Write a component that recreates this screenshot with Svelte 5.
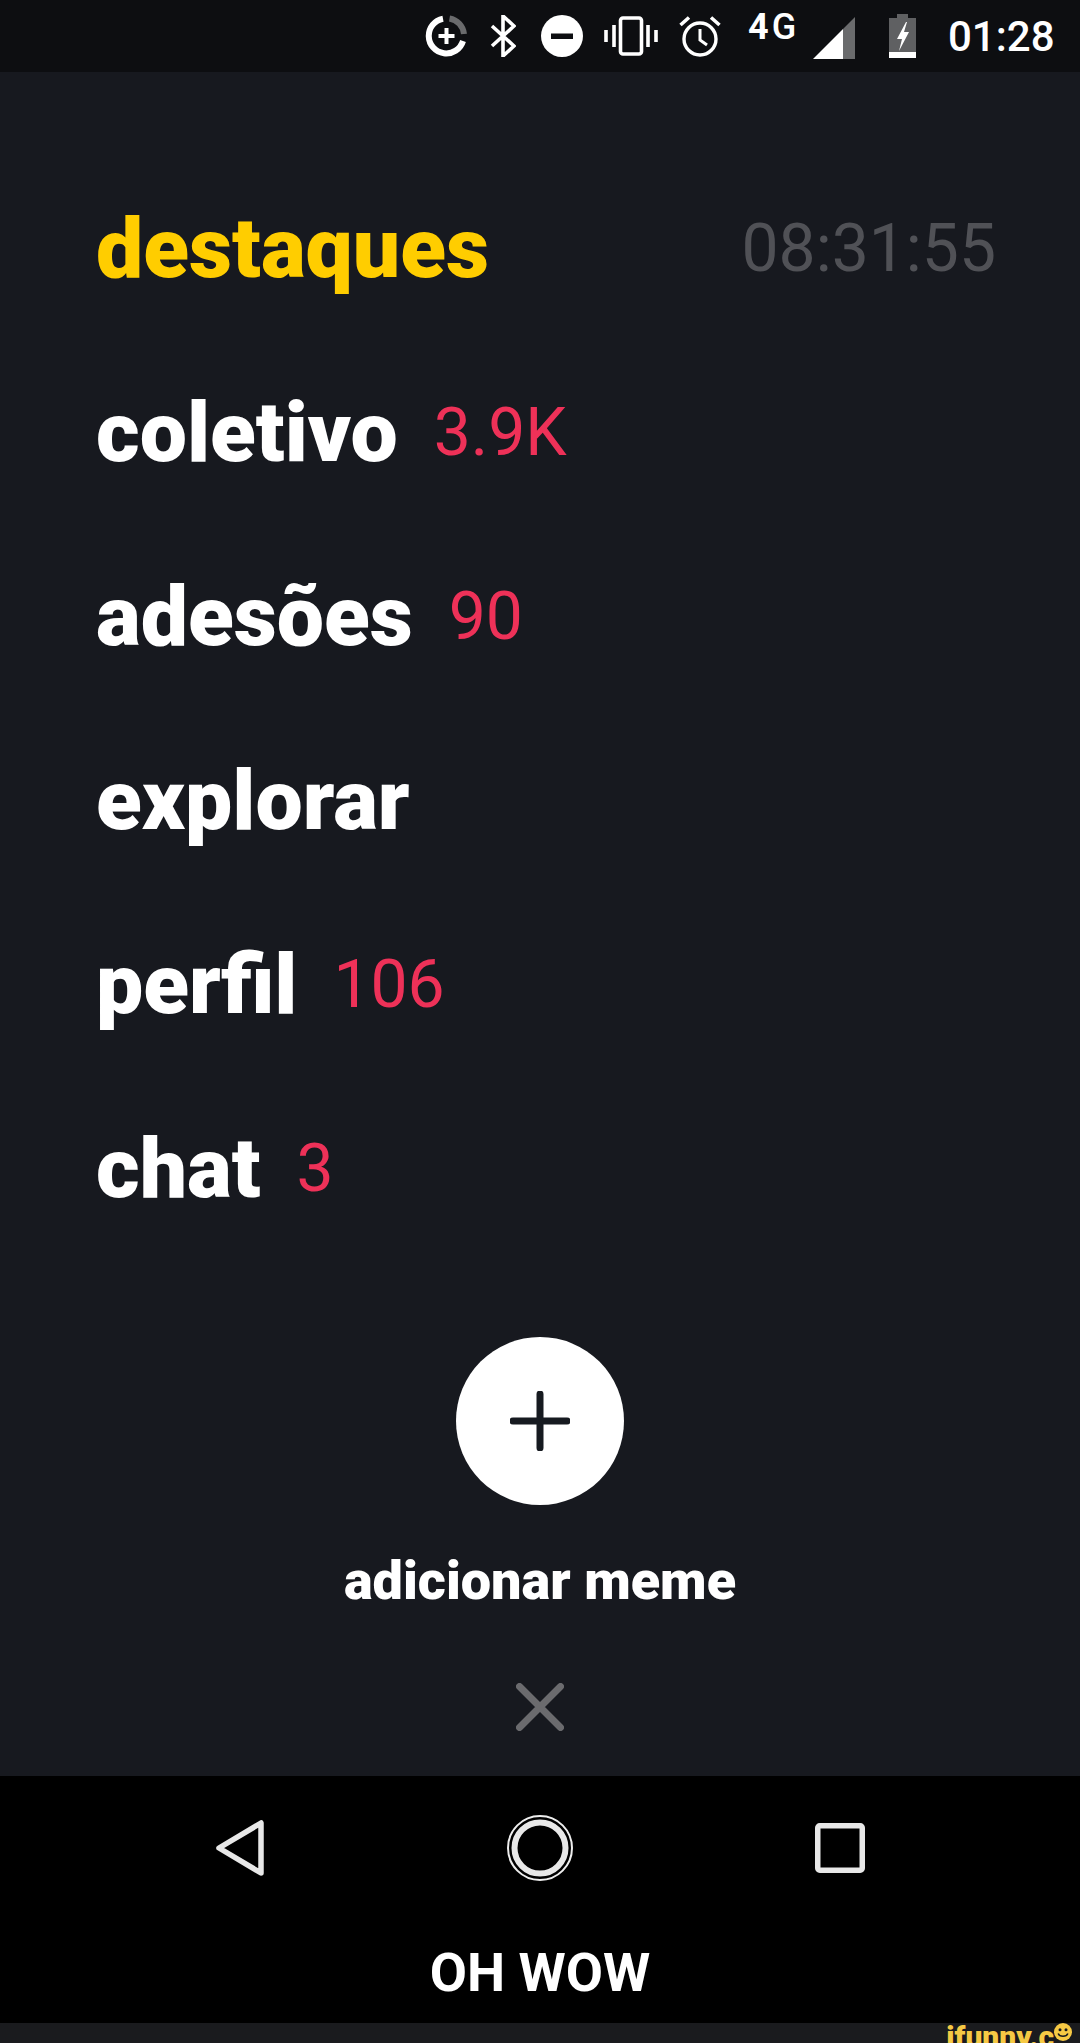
<script>
  const items = [
    { label: 'coletivo', count: '3.9K' },
    { label: 'adesões', count: '90' },
    { label: 'explorar' },
    { label: 'perfil', count: '106' },
    { label: 'chat', count: '3' }
  ];
</script>

<div class="screen">
  <header class="status">
    <svg class="saver" viewBox="0 0 42 42" aria-hidden="true">
      <path d="M24 3.500A17.500 17.500 0 0 1 38.500 19" fill="none" stroke="#6a6b6d" stroke-width="6" />
      <path d="M37.500 26A17.500 17.500 0 1 1 17.500 3.700" fill="none" stroke="#fff" stroke-width="6" />
      <path d="M21 13v16M13 21h16" stroke="#fff" stroke-width="4" />
    </svg>
    <svg class="bt" viewBox="0 0 26 42" aria-hidden="true">
      <path d="M2 11l22 20-11 10V1l11 10L2 31" fill="none" stroke="#fff" stroke-width="3.600" />
    </svg>
    <svg class="dnd" viewBox="0 0 42 42" aria-hidden="true">
      <circle cx="21" cy="21" r="21" fill="#fff" />
      <rect x="10" y="18.500" width="22" height="5.500" fill="#0d0e11" />
    </svg>
    <svg class="vibrate" viewBox="0 0 54 40" aria-hidden="true">
      <path d="M2 14v12M10 9v22M44 9v22M52 14v12" stroke="#fff" stroke-width="3.600" fill="none" />
      <rect x="16.500" y="2" width="21" height="36" rx="2.500" fill="none" stroke="#fff" stroke-width="3.600" />
    </svg>
    <svg class="alarm" viewBox="0 0 42 42" aria-hidden="true">
      <circle cx="21" cy="24" r="16" fill="none" stroke="#fff" stroke-width="3.400" />
      <path d="M21 14v11l7 5" fill="none" stroke="#fff" stroke-width="3" />
      <path d="M1.500 10L10 2.500M40.500 10L32 2.500" stroke="#fff" stroke-width="3.600" />
    </svg>
    <span class="net"><b>4</b>G</span>
    <svg class="signal" viewBox="0 0 42 42" aria-hidden="true">
      <path d="M42 0V42H30V12Z" fill="#6a6b6d" />
      <path d="M0 42L30 12V42Z" fill="#fff" />
    </svg>
    <svg class="battery" viewBox="0 0 27 44" aria-hidden="true">
      <path d="M8 0h11v4h8v40H0V4h8Z" fill="#5f6062" />
      <rect y="38" width="27" height="6" fill="#fff" />
      <path d="M17 8l-9 17h5l-3 12 10-19h-5l3-10Z" fill="#fff" />
    </svg>
    <span class="clock">01:28</span>
  </header>

  <main class="menu">
    <nav class="links">
      <div class="row">
        <span class="label active">destaques</span>
        <span class="timer">08:31:55</span>
      </div>
      {#each items as item}
        <div class="row">
          <span class="label">{item.label}</span>
          {#if item.count}<span class="count">{item.count}</span>{/if}
        </div>
      {/each}
    </nav>

    <div class="add">
      <div class="fab">
        <svg viewBox="0 0 60 60" width="60" height="60" aria-hidden="true">
          <path d="M30 3v54M3 30h54" stroke="#161a20" stroke-width="7" stroke-linecap="round" />
        </svg>
      </div>
      <span class="add-label">adicionar meme</span>
      <svg class="close" viewBox="0 0 48 48" width="48" height="48" aria-hidden="true">
        <path d="M3.500 3.500l41 41M44.500 3.500l-41 41" stroke="#6b6b6e" stroke-width="7" stroke-linecap="round" />
      </svg>
    </div>
  </main>

  <footer class="sysnav">
    <div class="sysbtns">
      <svg class="back" viewBox="0 0 48 56" width="48" height="56" aria-hidden="true">
        <path d="M45 3V53L3 28Z" fill="none" stroke="#e8e8e8" stroke-width="5.500" stroke-linejoin="round" />
      </svg>
      <svg class="home" viewBox="0 0 66 66" width="66" height="66" aria-hidden="true">
        <circle cx="33" cy="33" r="32" fill="none" stroke="#eee" stroke-width="2" />
        <circle cx="33" cy="33" r="25.500" fill="none" stroke="#e8e8e8" stroke-width="6" />
      </svg>
      <svg class="recent" viewBox="0 0 50 50" width="50" height="50" aria-hidden="true">
        <rect x="2.750" y="2.750" width="44.500" height="44.500" rx="2" fill="none" stroke="#e8e8e8" stroke-width="5.500" />
      </svg>
    </div>
    <p class="caption">OH WOW</p>
  </footer>

  <div class="watermark">
    <span>ifunny.c</span>
    <svg viewBox="0 0 24 24" width="18" height="18" aria-hidden="true">
      <circle cx="12" cy="12" r="12" fill="#f6c944" />
      <circle cx="8" cy="9" r="2" fill="#1a1b1e" />
      <circle cx="16" cy="9" r="2" fill="#1a1b1e" />
      <path d="M5.500 14c2 5 11 5 13 0" fill="none" stroke="#1a1b1e" stroke-width="2" />
    </svg>
  </div>
</div>

<style>
  :global(body) {
    margin: 0;
    background: #17191f;
  }

  .screen {
    width: 1080px;
    height: 2043px;
    display: flex;
    flex-direction: column;
    overflow: hidden;
    font-family: Roboto, "Liberation Sans", sans-serif;
    background: #17191f;
  }

  .status {
    height: 72px;
    flex: none;
    display: flex;
    align-items: flex-start;
    background: #0d0e11;
    color: #fff;
    padding-left: 425px;
    box-sizing: border-box;
  }

  .status svg {
    flex: none;
    display: block;
  }

  .saver { width: 43px; height: 42px; margin-top: 15px; }
  .bt { width: 26px; height: 42px; margin: 15px 0 0 22px; }
  .dnd { width: 42px; height: 42px; margin: 15px 0 0 25px; }
  .vibrate { width: 54px; height: 40px; margin: 16px 0 0 21px; }
  .alarm { width: 42px; height: 42px; margin: 15px 0 0 21px; }
  .signal { width: 42px; height: 42px; margin: 17px 0 0 16px; }
  .battery { width: 27px; height: 44px; margin: 14px 0 0 34px; }

  .net {
    width: 49px;
    margin: 10px 0 0 27px;
    font-size: 36px;
    font-weight: 500;
    line-height: 34px;
    white-space: nowrap;
  }

  .net b {
    font-weight: 700;
    margin-right: 3px;
  }

  .clock {
    margin: 16px 0 0 32px;
    font-size: 42px;
    font-weight: 500;
    line-height: 42px;
  }

  .menu {
    flex: 1;
    display: flex;
    flex-direction: column;
  }

  .links {
    padding: 85px 84px 0 96px;
    display: flex;
    flex-direction: column;
  }

  .row {
    height: 184px;
    display: flex;
    align-items: center;
    line-height: 184px;
  }

  .label {
    font-size: 84px;
    font-weight: 900;
    color: #fff;
    margin-right: 36px;
  }

  .active {
    color: #ffcd00;
  }

  .timer {
    margin-left: auto;
    font-size: 66px;
    color: #505156;
  }

  .count {
    font-size: 66px;
    color: #ee3158;
  }

  .add {
    display: flex;
    flex-direction: column;
    align-items: center;
  }

  .fab {
    width: 168px;
    height: 168px;
    margin-top: 76px;
    border-radius: 50%;
    background: #fff;
    display: flex;
    align-items: center;
    justify-content: center;
  }

  .add-label {
    margin-top: 46px;
    font-size: 54px;
    font-weight: 900;
    line-height: 60px;
    color: #fff;
  }

  .close {
    display: block;
    margin-top: 72px;
  }

  .sysnav {
    height: 247px;
    flex: none;
    background: #000;
  }

  .sysbtns {
    height: 105px;
    padding-top: 39px;
    position: relative;
    display: flex;
    justify-content: center;
  }

  .back { position: absolute; left: 216px; top: 44px; }
  .recent { position: absolute; left: 815px; top: 47px; }

  .caption {
    margin: 21px 0 0;
    text-align: center;
    font-size: 54px;
    font-weight: 700;
    line-height: 64px;
    color: #fff;
  }

  .watermark {
    height: 20px;
    flex: none;
    background: #1a1b1e;
    display: flex;
    justify-content: flex-end;
    align-items: flex-start;
    padding-right: 8px;
    overflow: hidden;
    font-size: 30px;
    font-weight: 900;
    line-height: 30px;
    color: #f6c944;
  }

  .watermark span {
    margin-top: -1px;
  }
</style>
